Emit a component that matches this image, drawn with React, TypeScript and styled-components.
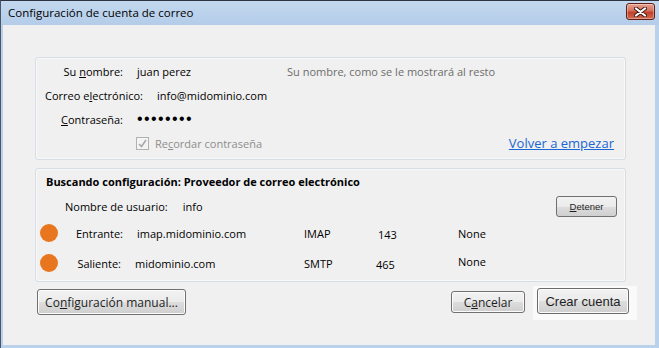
import styled, { createGlobalStyle } from 'styled-components';

const GlobalStyle = createGlobalStyle`
  html, body {
    margin: 0;
    padding: 0;
    background: #b9d1ea;
  }
  * {
    box-sizing: border-box;
  }
`;

const UI_FONT = `'Segoe UI', 'Open Sans', 'Noto Sans', sans-serif`;

const App = () => {
  return (
    <>
      <GlobalStyle />
      <Window>
        <TitleBar>
          <TitleText>Configuración de cuenta de correo</TitleText>
          <CloseButton aria-label="Cerrar">
            <svg width="13" height="10" viewBox="0 0 13 10">
              <path d="M2 1.5 L11 8.5 M11 1.5 L2 8.5" stroke="#3b1a14" strokeWidth="4" strokeLinecap="round" />
              <path d="M2 1.5 L11 8.5 M11 1.5 L2 8.5" stroke="#ffffff" strokeWidth="2.2" strokeLinecap="round" />
            </svg>
          </CloseButton>
        </TitleBar>

        <Client>
          <Panel $pad="1px 11px 4px 0">
            <FieldRow>
              <Label $width={87}>
                Su <u>n</u>ombre:
              </Label>
              <Value $width={136}>juan perez</Value>
              <Hint>Su nombre, como se le mostrará al resto</Hint>
            </FieldRow>
            <FieldRow>
              <Label $width={107}>
                Correo e<u>l</u>ectrónico:
              </Label>
              <Value>info@midominio.com</Value>
            </FieldRow>
            <FieldRow>
              <Label $width={87}>
                <u>C</u>ontraseña:
              </Label>
              <Dots>••••••••</Dots>
            </FieldRow>
            <CheckRow>
              <CheckBox>
                <svg width="9" height="9" viewBox="0 0 9 9">
                  <path d="M1 5 L3.5 7.5 L8 1" fill="none" stroke="#a8a8a8" strokeWidth="1.6" />
                </svg>
              </CheckBox>
              <Disabled>
                Re<u>c</u>ordar contraseña
              </Disabled>
              <Link href="#">Volver a empezar</Link>
            </CheckRow>
          </Panel>

          <Panel $pad="1px 8px 3px 0">
            <Heading>Buscando configuración: Proveedor de correo electrónico</Heading>
            <UserRow>
              <span>Nombre de usuario:</span>
              <span>info</span>
              <SmallButton>
                <u>D</u>etener
              </SmallButton>
            </UserRow>
            <ServerGrid>
              <Dot />
              <GridLabel>Entrante:</GridLabel>
              <HostValue>imap.midominio.com</HostValue>
              <span>IMAP</span>
              <Port $shift={2}>143</Port>
              <span>None</span>

              <Dot />
              <GridLabel $nudge={2}>Saliente:</GridLabel>
              <HostValue $nudge={2}>midominio.com</HostValue>
              <span>SMTP</span>
              <Port $shift={0}>465</Port>
              <Ssl>None</Ssl>
            </ServerGrid>
          </Panel>

          <ButtonRow>
            <Button $w={149} $h={26}>
              Co<u>n</u>figuración manual...
            </Button>
            <Spacer />
            <Button $w={74} $h={22}>
              C<u>a</u>ncelar
            </Button>
            <DefaultHalo>
              <Button $w={92} $h={26} $arial>
                Crear cuenta
              </Button>
            </DefaultHalo>
          </ButtonRow>
        </Client>
      </Window>
    </>
  );
};

export default App;

const Window = styled.div`
  width: 659px;
  height: 348px;
  display: flex;
  flex-direction: column;
  background: #b9d1ea;
  border-top: 1px solid #2c3440;
  border-left: 1px solid #4a5668;
  overflow: hidden;
  font-family: ${UI_FONT};
  font-size: 11px;
  color: #000;
`;

const TitleBar = styled.div`
  height: 24px;
  display: flex;
  align-items: center;
  padding: 0 4px 0 7px;
  background: linear-gradient(#c3d8ef, #b4cce9);
`;

const TitleText = styled.div`
  flex: 1;
  font-size: 11.5px;
  color: #000;
  padding-bottom: 1px;
`;

const CloseButton = styled.div`
  width: 29px;
  height: 17px;
  margin-top: -3px;
  display: flex;
  align-items: center;
  justify-content: center;
  border: 1px solid #5d1f17;
  border-radius: 3px;
  background: linear-gradient(#e7a294 0%, #d4705c 45%, #c2412a 55%, #d06a4f 100%);
  box-shadow: inset 0 0 0 1px rgba(255, 255, 255, 0.35);
`;

const Client = styled.div`
  flex: 1;
  margin: 0 4px 3px 2px;
  padding: 32px 29px 0 32px;
  background: #f0f0f0;
  display: flex;
  flex-direction: column;
  gap: 8px;
`;

const Panel = styled.div<{ $pad: string }>`
  border: 1px solid #d6dde4;
  border-radius: 3px;
  padding: ${(p) => p.$pad};
  display: flex;
  flex-direction: column;
  background: #f0f0f0;
  box-shadow: inset 0 0 0 1px #f8f8f8;
`;

const FieldRow = styled.div`
  height: 24px;
  display: flex;
  align-items: center;
  gap: 14px;
`;

const Label = styled.span<{ $width: number }>`
  width: ${(p) => p.$width}px;
  text-align: right;
  white-space: nowrap;
`;

const Value = styled.span<{ $width?: number }>`
  width: ${(p) => (p.$width ? `${p.$width}px` : 'auto')};
  white-space: nowrap;
`;

const Hint = styled.span`
  color: #6d6d6d;
  white-space: nowrap;
`;

const Dots = styled.span`
  font-family: 'Liberation Sans', Arial, sans-serif;
  font-size: 16px;
  letter-spacing: 1.4px;
  line-height: 1;
`;

const CheckRow = styled.div`
  height: 24px;
  display: flex;
  align-items: center;
  padding-left: 100px;
`;

const CheckBox = styled.span`
  width: 13px;
  height: 13px;
  border: 1px solid #b1b1b1;
  background: #f4f4f4;
  display: flex;
  align-items: center;
  justify-content: center;
  margin-right: 6px;
`;

const Disabled = styled.span`
  color: #8d8d8d;
`;

const Link = styled.a`
  margin-left: auto;
  font-size: 13px;
  color: #1a66d2;
  text-decoration: underline;
`;

const Heading = styled.div`
  height: 22px;
  display: flex;
  align-items: center;
  padding-left: 10px;
  font-weight: bold;
`;

const UserRow = styled.div`
  height: 24px;
  margin-top: 2px;
  display: flex;
  align-items: center;
  gap: 15px;
  padding-left: 29px;
`;

const SmallButton = styled.span`
  margin-left: auto;
  width: 61px;
  height: 21px;
  display: flex;
  align-items: center;
  justify-content: center;
  border: 1px solid #707070;
  border-radius: 3px;
  background: linear-gradient(#f2f2f2 0%, #ebebeb 50%, #dddddd 51%, #cfcfcf 100%);
  font-family: 'Liberation Sans', Arial, sans-serif;
  font-size: 9.5px;
  color: #1e1e1e;
`;

const ServerGrid = styled.div`
  display: grid;
  grid-template-columns: 18px 65px 181px 72px 82px 1fr;
  grid-auto-rows: 30px;
  align-items: center;
  padding-left: 4px;
`;

const Dot = styled.span`
  width: 18px;
  height: 18px;
  border-radius: 50%;
  background: #e8761f;
`;

const GridLabel = styled.span<{ $nudge?: number }>`
  text-align: right;
  padding-right: ${(p) => p.$nudge ?? 0}px;
`;

const HostValue = styled.span<{ $nudge?: number }>`
  padding-left: ${(p) => 14 - (p.$nudge ?? 0)}px;
`;

const Port = styled.span<{ $shift: number }>`
  padding-top: 3px;
  padding-left: ${(p) => p.$shift}px;
`;

const Ssl = styled.span`
  padding-bottom: 3px;
`;

const ButtonRow = styled.div`
  display: flex;
  align-items: flex-start;
  margin-top: -4px;
  margin-right: -11px;
  padding-left: 2px;
`;

const Spacer = styled.div`
  flex: 1;
`;

const Button = styled.span<{ $w: number; $h: number; $arial?: boolean }>`
  width: ${(p) => p.$w}px;
  height: ${(p) => p.$h}px;
  margin-top: ${(p) => (p.$h === 26 ? 3 : 5)}px;
  display: flex;
  align-items: center;
  justify-content: center;
  border: 1px solid #707070;
  border-radius: 3px;
  background: linear-gradient(#f2f2f2 0%, #ebebeb 50%, #dddddd 51%, #cfcfcf 100%);
  box-shadow: inset 0 0 0 1px #fcfcfc;
  font-family: ${(p) => (p.$arial ? `'Liberation Sans', Arial, sans-serif` : UI_FONT)};
  font-size: ${(p) => (p.$arial ? '13px' : '12px')};
  color: #1e1e1e;
  white-space: nowrap;
`;

const DefaultHalo = styled.div`
  margin-left: 8px;
  padding: 0 8px 6px 4px;
  background: #fafafa;

  & > span {
    margin-top: 2px;
    border-color: #6a6a6a;
  }
`;
